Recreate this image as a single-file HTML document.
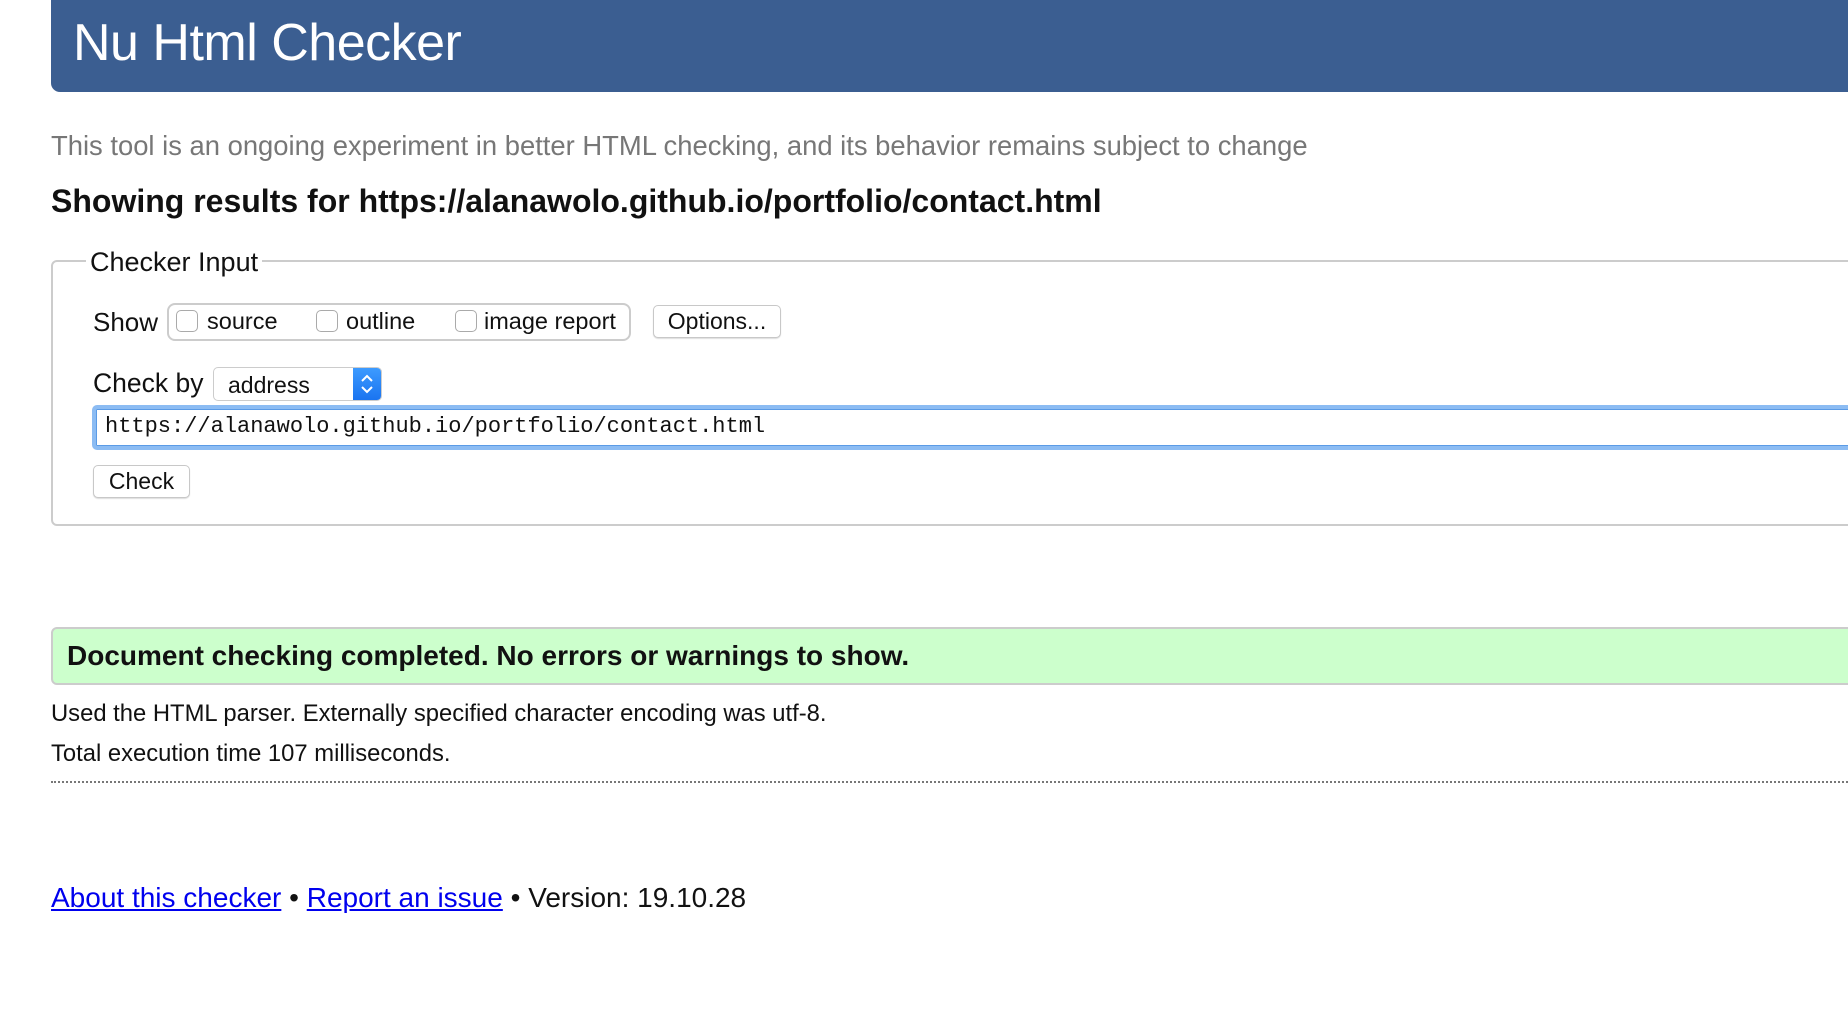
<!DOCTYPE html>
<html><head><meta charset="utf-8"><style>
html,body{margin:0;padding:0;background:#fff;width:1848px;height:1024px;overflow:hidden;font-family:"Liberation Sans",Arial,sans-serif;color:#111}
.hdr{position:absolute;left:51px;top:0;width:1820px;height:92px;background:#3b5e91;border-radius:0 0 0 9px}
.hdr span{position:absolute;left:22px;top:13px;font-size:52px;color:#fff;letter-spacing:-0.5px}
.t{position:absolute;white-space:nowrap}
.fs{position:absolute;left:51px;top:260px;width:1830px;height:266px;border:2px solid #ccc;border-radius:6px;box-sizing:border-box}
.legend{position:absolute;left:86px;top:247px;background:#fff;padding:0 4px;font-size:27px}
.grp{position:absolute;left:167px;top:303px;width:464px;height:38px;border:2px solid #ccc;border-radius:8px;box-sizing:border-box}
.cb{position:absolute;width:22px;height:22px;border:1.5px solid #aaa;border-radius:5px;box-sizing:border-box;background:#fff;top:310px}
.btn{position:absolute;border:1.5px solid #c8c8c8;border-radius:5px;box-sizing:border-box;background:#fff;font-size:23px;text-align:center;box-shadow:0 1px 1px #ddd}
.sel{position:absolute;left:213px;top:367px;width:169px;height:34px;border:1.5px solid #ccc;border-radius:5px;box-sizing:border-box;background:#fff;overflow:hidden}
.sel .b{position:absolute;right:0;top:0;width:28px;height:100%;background:linear-gradient(#3d9bff,#1a74f0)}
.inp{position:absolute;left:92px;top:405px;width:1800px;height:45px;border:4px solid #8cbcf3;border-radius:5px;box-sizing:border-box;box-shadow:inset 0 0 0 1px #5b9be6}
.green{position:absolute;left:51px;top:627px;width:1830px;height:58px;background:#ccffcc;border:2px solid #ccc;border-radius:6px;box-sizing:border-box}
a{color:#0000ee}
</style></head><body>
<div class="hdr"><span>Nu Html Checker</span></div>
<div class="t" style="left:51px;top:130px;font-size:27.4px;color:#777">This tool is an ongoing experiment in better HTML checking, and its behavior remains subject to change</div>
<div class="t" style="left:51px;top:183px;font-size:32px;font-weight:bold">Showing results for https://alanawolo.github.io/portfolio/contact.html</div>
<div class="fs"></div>
<div class="legend t">Checker Input</div>
<div class="t" style="left:93px;top:307px;font-size:26px">Show</div>
<div class="grp"></div>
<div class="cb" style="left:176px"></div>
<div class="t" style="left:207px;top:308px;font-size:23.5px">source</div>
<div class="cb" style="left:316px"></div>
<div class="t" style="left:346px;top:308px;font-size:23.5px">outline</div>
<div class="cb" style="left:455px"></div>
<div class="t" style="left:484px;top:308px;font-size:23.5px">image report</div>
<div class="btn" style="left:653px;top:305px;width:128px;height:33px;line-height:30px">Options...</div>
<div class="t" style="left:93px;top:368px;font-size:26.5px">Check by</div>
<div class="sel"><span class="t" style="left:14px;top:4px;font-size:23px">address</span><div class="b"><svg width="28" height="32" viewBox="0 0 28 32"><path d="M9 13l5-5 5 5M9 19l5 5 5-5" fill="none" stroke="#fff" stroke-width="2"/></svg></div></div>
<div class="inp"></div>
<div class="t" style="left:105px;top:414px;font-size:22px;font-family:'Liberation Mono',monospace">https://alanawolo.github.io/portfolio/contact.html</div>
<div class="btn" style="left:93px;top:465px;width:97px;height:33px;line-height:31px">Check</div>
<div class="green"></div>
<div class="t" style="left:67px;top:640px;font-size:28px;font-weight:bold">Document checking completed. No errors or warnings to show.</div>
<div class="t" style="left:51px;top:700px;font-size:23.8px">Used the HTML parser. Externally specified character encoding was utf-8.</div>
<div class="t" style="left:51px;top:740px;font-size:23.8px">Total execution time 107 milliseconds.</div>
<div style="position:absolute;left:51px;top:781px;width:1800px;border-top:2px dotted #777"></div>
<div class="t" style="left:51px;top:882px;font-size:28px"><a href="#">About this checker</a> • <a href="#">Report an issue</a> • Version: 19.10.28</div>
</body></html>
